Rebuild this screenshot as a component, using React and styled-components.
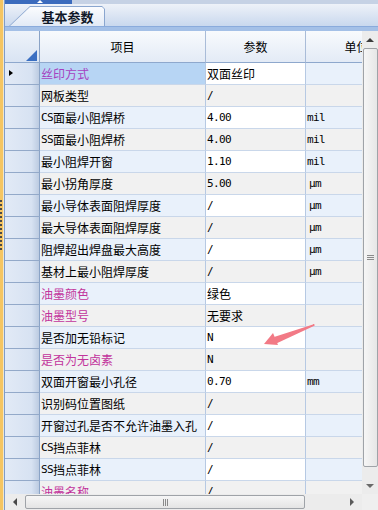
import React from 'react';
import styled, { createGlobalStyle, css } from 'styled-components';

const GlobalStyle = createGlobalStyle`
  html, body { margin: 0; padding: 0; }
  body {
    width: 378px;
    height: 510px;
    overflow: hidden;
    background: #f0f0f0;
    font-family: "Noto Sans CJK SC", "Liberation Sans", sans-serif;
    font-size: 12px;
    color: #000;
  }
  * { box-sizing: border-box; }
`;

const COLS = '35px 166px 100px 102px';

const Screen = styled.div`
  position: relative;
  display: flex;
  width: 378px;
  height: 510px;
  overflow: hidden;
`;

const SideStrip = styled.div`
  width: 4px;
  flex: none;
  background: #f5c561;
  border-right: 1px solid #efe6cf;
`;

const DashMark = styled.div`
  margin-top: 200px;
  height: 50px;
  border-left: 2px dotted #4a4a4a;
`;

const Panel = styled.div`
  flex: 1;
  display: flex;
  flex-direction: column;
  min-width: 0;
  border-left: 1px solid #7f9cc7;
`;

const TopBar = styled.div`
  display: flex;
  height: 4px;
  flex: none;
  background: #c6d2e5;
`;

const TopTab = styled.div`
  position: relative;
  width: 67px;
  background: #3b6bbd;
  &::after {
    content: '';
    position: absolute;
    left: 32px;
    top: 0;
    border-left: 3px solid transparent;
    border-right: 3px solid transparent;
    border-bottom: 3px solid #fff;
  }
`;

const TabStrip = styled.div`
  display: flex;
  align-items: flex-end;
  height: 22px;
  flex: none;
  padding-left: 4px;
  background: linear-gradient(#eef2f9, #c9d8ee);
`;

const Tab = styled.div`
  position: relative;
  width: 96px;
  height: 20px;
  background: #8aa6cf;
  clip-path: polygon(0 100%, 21px 0, calc(100% - 3px) 0, 100% 3px, 100% 100%);
`;

const TabFace = styled.div`
  position: absolute;
  inset: 1px 1px 0 1px;
  display: flex;
  align-items: center;
  justify-content: center;
  padding-left: 21px;
  background: linear-gradient(#fbfcfe, #e2eaf6);
  clip-path: polygon(0 100%, 20px 0, calc(100% - 2px) 0, 100% 2px, 100% 100%);
  font-size: 13px;
  font-weight: 700;
  color: #101828;
`;

const TabBand = styled.div`
  height: 5px;
  flex: none;
  background: #a4c0e7;
  border-top: 1px solid #8aabdc;
`;

const GridArea = styled.div`
  flex: 1;
  display: flex;
  min-height: 0;
`;

const Viewport = styled.div`
  flex: 1;
  min-width: 0;
  overflow: hidden;
  background: #fff;
`;

const HeaderRow = styled.div`
  display: grid;
  grid-template-columns: ${COLS};
  height: 32px;
`;

const HeadCell = styled.div`
  display: flex;
  align-items: center;
  justify-content: center;
  background: linear-gradient(#f8fafd, #e3ebf6);
  border-right: 1px solid #a9bcd8;
  border-bottom: 1px solid #8ea8cd;
  white-space: nowrap;
  overflow: hidden;
`;

const CornerCell = styled(HeadCell)`
  position: relative;
  background: linear-gradient(#eef3fa, #d9e4f3);
  border-right-color: #8aa3c6;
  &::after {
    content: '';
    position: absolute;
    right: 2px;
    bottom: 1px;
    border-left: 11px solid transparent;
    border-bottom: 11px solid #3a6fc2;
  }
`;

const DataRow = styled.div`
  display: grid;
  grid-template-columns: ${COLS};
  height: 22px;
`;

const RowHead = styled.div`
  position: relative;
  background: linear-gradient(to right, #e2eaf6, #d7e2f2 78%, #bccbe1);
  border-right: 1px solid #8aa3c6;
  border-bottom: 1px solid #93a9c9;
  ${({ $current }) => $current && css`
    &::after {
      content: '';
      position: absolute;
      left: 4px;
      top: 7px;
      border-top: 3.5px solid transparent;
      border-bottom: 3.5px solid transparent;
      border-left: 4px solid #000;
    }
  `}
`;

const cellBg = ({ $kind, $odd, $selected }) => {
  if ($kind === 'name' && $selected) return '#b7d5f4';
  if ($odd) return '#f1f1f1';
  return $kind === 'param' ? '#ffffff' : '#e9f1fb';
};

const Cell = styled.div`
  display: flex;
  align-items: center;
  padding-left: ${({ $pad }) => $pad || 1}px;
  background: ${cellBg};
  border-right: 1px solid #b6c9e3;
  border-bottom: 1px solid #c9d7ea;
  color: ${({ $accent, $selected }) =>
    $selected ? '#a63fc0' : $accent ? '#c2349c' : '#000'};
  white-space: nowrap;
  overflow: hidden;
  line-height: 21px;
`;

const Latin = styled.span`
  font-family: "DejaVu Sans Mono", "Liberation Mono", monospace;
  font-size: 11px;
  letter-spacing: -0.6px;
`;

const VScroll = styled.div`
  width: 16px;
  flex: none;
  display: flex;
  flex-direction: column;
  background: #ececec;
`;

const ArrowBtn = styled.div`
  position: relative;
  flex: none;
  width: ${({ $w }) => $w || 16}px;
  height: ${({ $h }) => $h || 16}px;
  &::after {
    content: '';
    position: absolute;
    left: 50%;
    top: 50%;
    transform: translate(-50%, -50%);
    ${({ $dir }) => $dir === 'up' && css`
      border-left: 4px solid transparent;
      border-right: 4px solid transparent;
      border-bottom: 4px solid #3c3c3c;
    `}
    ${({ $dir }) => $dir === 'down' && css`
      border-left: 4px solid transparent;
      border-right: 4px solid transparent;
      border-top: 4px solid #6a6a6a;
    `}
    ${({ $dir }) => $dir === 'left' && css`
      border-top: 4px solid transparent;
      border-bottom: 4px solid transparent;
      border-right: 4px solid #4a4a4a;
    `}
    ${({ $dir }) => $dir === 'right' && css`
      border-top: 4px solid transparent;
      border-bottom: 4px solid transparent;
      border-left: 4px solid #5a5a5a;
    `}
  }
`;

const VThumb = styled.div`
  flex: 1;
  margin: 0 0 10px 1px;
  display: flex;
  align-items: center;
  justify-content: center;
  border: 1px solid #9fa3a8;
  border-radius: 2px;
  background: linear-gradient(to right, #f6f6f6, #e6e6e6);
`;

const Grip = styled.div`
  width: ${({ $vertical }) => ($vertical ? '7px' : '5px')};
  height: ${({ $vertical }) => ($vertical ? '5px' : '7px')};
  background: ${({ $vertical }) =>
    $vertical
      ? 'repeating-linear-gradient(#8a8a8a 0 1px, transparent 1px 2px)'
      : 'repeating-linear-gradient(to right, #8a8a8a 0 1px, transparent 1px 2px)'};
`;

const HScroll = styled.div`
  display: flex;
  height: 16px;
  flex: none;
  background: #ececec;
`;

const HTrack = styled.div`
  flex: 1;
  display: flex;
  align-items: stretch;
`;

const HThumb = styled.div`
  width: 280px;
  margin: 1px 0 1px;
  display: flex;
  align-items: center;
  justify-content: center;
  border: 1px solid #9fa3a8;
  border-radius: 2px;
  background: linear-gradient(#f6f6f6, #e4e4e4);
`;

const HSpacer = styled.div`
  flex: 1;
`;

const Corner = styled.div`
  width: 16px;
  flex: none;
  background: #efefef;
`;

const Annotation = styled.svg`
  position: absolute;
  left: 0;
  top: 0;
  pointer-events: none;
`;

const ROWS = [
  { name: '丝印方式', value: '双面丝印', accent: true },
  { name: '网板类型', value: '/' },
  { name: 'CS面最小阻焊桥', value: '4.00', unit: 'mil' },
  { name: 'SS面最小阻焊桥', value: '4.00', unit: 'mil' },
  { name: '最小阻焊开窗', value: '1.10', unit: 'mil' },
  { name: '最小拐角厚度', value: '5.00', unit: 'μm' },
  { name: '最小导体表面阻焊厚度', value: '/', unit: 'μm' },
  { name: '最大导体表面阻焊厚度', value: '/', unit: 'μm' },
  { name: '阻焊超出焊盘最大高度', value: '/', unit: 'μm' },
  { name: '基材上最小阻焊厚度', value: '/', unit: 'μm' },
  { name: '油墨颜色', value: '绿色', accent: true },
  { name: '油墨型号', value: '无要求', accent: true },
  { name: '是否加无铅标记', value: 'N' },
  { name: '是否为无卤素', value: 'N', accent: true },
  { name: '双面开窗最小孔径', value: '0.70', unit: 'mm' },
  { name: '识别码位置图纸', value: '/' },
  { name: '开窗过孔是否不允许油墨入孔', value: '/' },
  { name: 'CS挡点菲林', value: '/' },
  { name: 'SS挡点菲林', value: '/' },
  { name: '油墨名称', value: '/', accent: true },
];

// ascii runs get the narrow mono face, like the old bitmap font
const mixed = (text) =>
  text.split(/([\x00-\x7f]+)/).filter(Boolean).map((part, i) =>
    /^[\x00-\x7f]+$/.test(part) ? <Latin key={i}>{part}</Latin> : part
  );

export default function App() {
  return (
    <>
      <GlobalStyle />
      <Screen>
        <SideStrip>
          <DashMark />
        </SideStrip>
        <Panel>
          <TopBar>
            <TopTab />
          </TopBar>
          <TabStrip>
            <Tab>
              <TabFace>基本参数</TabFace>
            </Tab>
          </TabStrip>
          <TabBand />
          <GridArea>
            <Viewport>
              <HeaderRow>
                <CornerCell />
                <HeadCell>项目</HeadCell>
                <HeadCell>参数</HeadCell>
                <HeadCell>单位</HeadCell>
              </HeaderRow>
              {ROWS.map((row, i) => (
                <DataRow key={row.name}>
                  <RowHead $current={i === 0} />
                  <Cell $kind="name" $odd={i % 2 === 1} $selected={i === 0} $accent={row.accent}>
                    {mixed(row.name)}
                  </Cell>
                  <Cell $kind="param" $odd={i % 2 === 1}>
                    {mixed(row.value)}
                  </Cell>
                  <Cell $kind="unit" $odd={i % 2 === 1} $pad={row.unit === 'μm' ? 3 : 1}>
                    {row.unit && <Latin>{row.unit}</Latin>}
                  </Cell>
                </DataRow>
              ))}
            </Viewport>
            <VScroll>
              <ArrowBtn $dir="up" $h={17} />
              <VThumb>
                <Grip $vertical />
              </VThumb>
              <ArrowBtn $dir="down" $h={17} />
            </VScroll>
          </GridArea>
          <HScroll>
            <HTrack>
              <ArrowBtn $dir="left" $w={20} />
              <HThumb>
                <Grip />
              </HThumb>
              <HSpacer />
              <ArrowBtn $dir="right" $w={20} />
            </HTrack>
            <Corner />
          </HScroll>
        </Panel>
        <Annotation width="378" height="510" viewBox="0 0 378 510">
          <path d="M314,325 L275,337.5 L276.5,342.5 Z" fill="#f27a86" stroke="#f27a86" strokeWidth="1.5" strokeLinejoin="round" />
          <polygon points="264,344 273,333 278,345" fill="#f27a86" />
        </Annotation>
      </Screen>
    </>
  );
}
